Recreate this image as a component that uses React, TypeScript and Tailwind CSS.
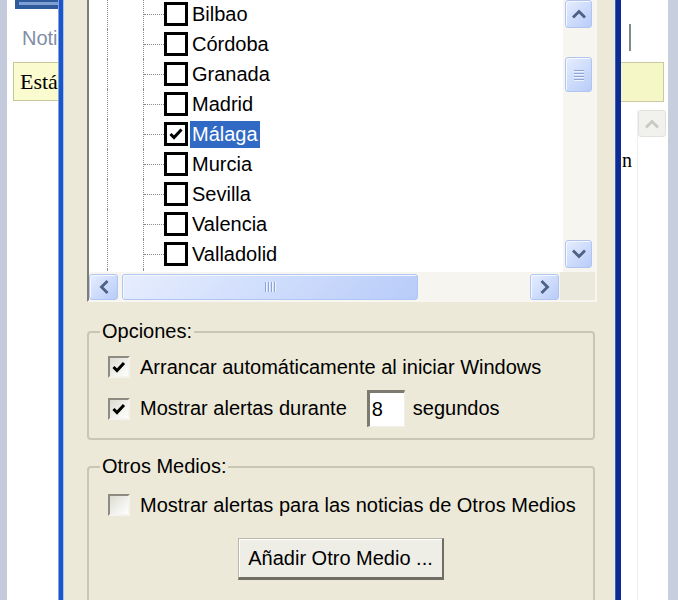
import React from "react";

const cities = ["Bilbao", "Córdoba", "Granada", "Madrid", "Málaga", "Murcia", "Sevilla", "Valencia", "Valladolid"];

type Dir = "up" | "down" | "left" | "right";

function Chevron({ dir, color = "#4d6185" }: { dir: Dir; color?: string }) {
  const pts: Record<Dir, string> = {
    up: "3,10.5 8,5.5 13,10.5",
    down: "3,5.5 8,10.5 13,5.5",
    left: "10.5,3 5.5,8 10.5,13",
    right: "5.5,3 10.5,8 5.5,13",
  };
  return (
    <svg width="16" height="16" viewBox="0 0 16 16">
      <polyline points={pts[dir]} fill="none" stroke={color} strokeWidth="2.8" strokeLinecap="square" strokeLinejoin="miter" />
    </svg>
  );
}

const btnCls =
  "flex items-center justify-center rounded-[3px] border border-[#b1c5f3] bg-[linear-gradient(135deg,#e6edfe,#b8ccf9)] shadow-[inset_1px_1px_0_#f5f8ff]";

function TreeCheck({ checked }: { checked?: boolean }) {
  return (
    <div className="w-[24px] h-[24px] self-center border-[3px] border-black bg-white flex items-center justify-center shrink-0">
      {checked && (
        <svg width="16" height="16" viewBox="0 0 16 16">
          <polyline points="2.5,8 6,11.5 13.5,3.5" fill="none" stroke="#000" strokeWidth="3" />
        </svg>
      )}
    </div>
  );
}

function XPCheck({ checked }: { checked?: boolean }) {
  return (
    <div className="w-[22px] h-[22px] shrink-0 border-2 border-t-[#8e8c80] border-l-[#8e8c80] border-b-[#f4f3ee] border-r-[#f4f3ee] bg-[linear-gradient(135deg,#dddcd3,#ffffff)] flex items-center justify-center">
      {checked && (
        <svg width="16" height="16" viewBox="0 0 16 16">
          <polyline points="2.5,8 6,11.5 13,4" fill="none" stroke="#000" strokeWidth="3" />
        </svg>
      )}
    </div>
  );
}

function TreeRow({ name }: { name: string }) {
  const sel = name === "Málaga";
  return (
    <div className="flex h-[30px] shrink-0">
      <div className="w-[18px]" />
      <div className="w-px border-l border-dotted border-[#8a8a8a]" />
      <div className="w-[35px]" />
      <div className="w-[21px] border-l border-dotted border-[#8a8a8a] flex items-center">
        <div className="w-full border-t border-dotted border-[#8a8a8a]" />
      </div>
      <TreeCheck checked={sel} />
      <span
        className={
          "ml-[2px] self-center px-[2px] h-[27px] leading-[27px] " +
          (sel ? "bg-[#316ac5] text-white" : "text-black")
        }
      >
        {name}
      </span>
    </div>
  );
}

function GripH() {
  return (
    <div className="flex flex-col gap-[2px] items-center">
      {[0, 1, 2, 3].map((i) => (
        <div key={i} className="w-[10px] h-px bg-[#8ea4d6] shadow-[0_1px_0_#eef3ff]" />
      ))}
    </div>
  );
}

function GripV() {
  return (
    <div className="flex gap-[2px] items-center">
      {[0, 1, 2, 3].map((i) => (
        <div key={i} className="h-[10px] w-px bg-[#8ea4d6] shadow-[1px_0_0_#eef3ff]" />
      ))}
    </div>
  );
}

export default function App() {
  return (
    <div className="w-[678px] h-[600px] overflow-hidden flex font-['Liberation_Sans',Arial,sans-serif] text-[20px] leading-[23px] text-black">
      {/* left background app */}
      <div className="w-[58px] shrink-0 flex overflow-hidden">
        <div className="w-[7px] shrink-0 bg-[#c3cadb]" />
        <div className="flex-1 bg-white flex flex-col overflow-hidden">
          <div className="ml-[8px] w-[50px] h-[9px] shrink-0 bg-[#2f5a9c] flex items-start px-[4px] pt-[2px]">
            <div className="w-full h-[3px] bg-[#7d9fd3]" />
          </div>
          <div className="ml-[15px] mt-[18px] text-[20px] text-[#7f8ea6] whitespace-nowrap">Noti</div>
          <div className="ml-[6px] mt-[12px] w-[60px] h-[39px] shrink-0 bg-[#fbfbd0] border border-[#c8c89a] border-r-0 flex items-center pl-[6px]">
            <span className="font-['Liberation_Serif',serif] text-[22px] whitespace-nowrap">Está</span>
          </div>
        </div>
      </div>

      {/* left frame */}
      <div className="w-[6px] shrink-0 flex">
        <div className="w-px bg-[#7ea2e4]" />
        <div className="w-[4px] bg-[#1c55c8]" />
        <div className="w-px bg-[#a9c3f0]" />
      </div>

      {/* dialog body */}
      <div className="w-[551px] shrink-0 bg-[#ece9d8] flex flex-col pl-[23px]">
        {/* tree box */}
        <div className="w-[510px] h-[302px] shrink-0 flex flex-col border-l-2 border-l-[#7f7d72] border-r-2 border-r-[#f7f6f0] border-b-2 border-b-[#f7f6f0]">
          <div className="flex h-[272px]">
            <div className="w-[474px] bg-white overflow-hidden">
              <div className="flex flex-col -mt-px">
                {cities.map((c) => (
                  <TreeRow key={c} name={c} />
                ))}
                <div className="flex h-[10px] shrink-0">
                  <div className="w-[18px]" />
                  <div className="w-px border-l border-dotted border-[#8a8a8a]" />
                  <div className="w-[35px]" />
                  <div className="w-px border-l border-dotted border-[#8a8a8a]" />
                </div>
              </div>
            </div>
            <div className="w-[32px] bg-[#f6f5f0] flex flex-col pl-[2px]">
              <div className={btnCls + " w-[27px] h-[28px] shrink-0"}>
                <Chevron dir="up" />
              </div>
              <div className={btnCls + " w-[27px] h-[35px] mt-[29px] shrink-0"}>
                <GripH />
              </div>
              <div className="flex-1" />
              <div className={btnCls + " w-[27px] h-[28px] shrink-0"}>
                <Chevron dir="down" />
              </div>
              <div className="h-[4px]" />
            </div>
          </div>
          <div className="flex h-[28px]">
            <div className="w-[471px] bg-[#f6f5f0] flex pt-[2px]">
              <div className={btnCls + " w-[29px] h-[26px] shrink-0"}>
                <Chevron dir="left" />
              </div>
              <div className={btnCls + " ml-[4px] w-[296px] h-[26px] shrink-0"}>
                <GripV />
              </div>
              <div className="flex-1" />
              <div className={btnCls + " w-[29px] h-[26px] shrink-0"}>
                <Chevron dir="right" />
              </div>
              <div className="w-px" />
            </div>
            <div className="flex-1 bg-[#ebe9dc]" />
          </div>
        </div>

        {/* Opciones */}
        <fieldset className="mt-[18px] mr-[2px] w-[508px] border-2 border-[#c8c6b5] rounded-[4px] pb-[11px] min-w-0">
          <legend className="ml-[11px] px-[2px] h-[23px] leading-[23px]">Opciones:</legend>
          <div className="flex items-center h-[26px] mt-[11px] pl-[19px]">
            <XPCheck checked />
            <span className="ml-[10px] whitespace-nowrap">Arrancar automáticamente al iniciar Windows</span>
          </div>
          <div className="flex items-center h-[37px] mt-[10px] pl-[19px]">
            <XPCheck checked />
            <span className="ml-[10px] whitespace-nowrap">Mostrar alertas durante</span>
            <div className="ml-[20px] w-[38px] h-[37px] bg-white border-t-[3px] border-l-[3px] border-t-[#7d7b70] border-l-[#7d7b70] border-b border-r border-b-[#f0efe8] border-r-[#f0efe8] flex items-center pl-[2px]">
              8
            </div>
            <span className="ml-[8px] whitespace-nowrap">segundos</span>
          </div>
        </fieldset>

        {/* Otros Medios */}
        <fieldset className="mt-[15px] mr-[2px] w-[508px] border-2 border-[#c8c6b5] rounded-[4px] pb-[30px] min-w-0 flex flex-col">
          <legend className="ml-[11px] px-[2px] h-[23px] leading-[23px]">Otros Medios:</legend>
          <div className="flex items-center h-[26px] mt-[14px] pl-[19px]">
            <XPCheck />
            <span className="ml-[10px] whitespace-nowrap">Mostrar alertas para las noticias de Otros Medios</span>
          </div>
          <div className="flex justify-center mt-[20px]">
            <div className="w-[206px] h-[42px] flex items-center justify-center bg-[#efeee6] border border-[#b9b7aa] border-r-2 border-b-[3px] border-r-[#6f6d64] border-b-[#6f6d64] shadow-[inset_1px_1px_0_#ffffff] whitespace-nowrap">
              Añadir Otro Medio ...
            </div>
          </div>
        </fieldset>
      </div>

      {/* right frame */}
      <div className="w-[6px] shrink-0 flex">
        <div className="w-px bg-[#3a60c8]" />
        <div className="w-[5px] bg-[#0d2b93]" />
      </div>

      {/* right background app */}
      <div className="w-[57px] shrink-0 flex overflow-hidden">
        <div className="w-[47px] shrink-0 bg-white flex flex-col">
          <div className="ml-[8px] mt-[24px] w-[2px] h-[27px] bg-[#7e8a8a]" />
          <div className="mt-[11px] h-[40px] w-[43px] shrink-0 bg-[#f5f7c6] border border-[#c9caa0] border-l-0" />
          <div className="flex mt-[8px] flex-1">
            <div className="w-[16px] pl-[1px] pt-[40px] font-['Liberation_Serif',serif] text-[20px] leading-[20px]">n</div>
            <div className="w-[30px] flex flex-col border-l border-[#efefef]">
              <div className="w-[28px] h-[27px] flex items-center justify-center rounded-[3px] border border-[#e2e2dd] bg-[#f1f1ee]">
                <Chevron dir="up" color="#c9c9c4" />
              </div>
            </div>
          </div>
        </div>
        <div className="flex-1 bg-[#c7cfdf]" />
      </div>
    </div>
  );
}
